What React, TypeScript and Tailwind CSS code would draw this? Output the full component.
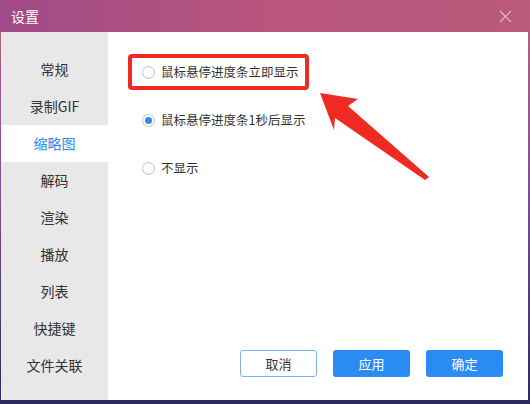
import { useState } from "react";

const font = { fontFamily: '"Noto Sans CJK SC", "Noto Sans", sans-serif' };

const menuItems = ["常规", "录制GIF", "缩略图", "解码", "渲染", "播放", "列表", "快捷键", "文件关联"];

const options = ["鼠标悬停进度条立即显示", "鼠标悬停进度条1秒后显示", "不显示"];

function Radio({ checked }: { checked: boolean }) {
  return (
    <span className="w-[13px] h-[13px] rounded-full border border-[#c4c4c4] bg-white flex items-center justify-center shrink-0">
      {checked && <span className="w-[7px] h-[7px] rounded-full bg-[#2e8ded]" />}
    </span>
  );
}

export default function App() {
  const [active, setActive] = useState(2);
  const [choice, setChoice] = useState(1);

  return (
    <div
      className="w-[530px] h-[404px] flex flex-col bg-gradient-to-b from-[#c0607e] via-[#7a4c96] to-[#2c2a5e] overflow-hidden"
      style={font}
    >
      {/* title bar */}
      <div className="h-[32px] shrink-0 flex items-center justify-between pl-[11px] pr-[18px] bg-gradient-to-r from-[#a04a87] via-[#b8567c] to-[#b85a7c]">
        <span className="text-white text-[14px] leading-none">设置</span>
        <svg width="13" height="13" viewBox="0 0 13 13" className="text-[#f0b8cc]">
          <path d="M1 1L12 12M12 1L1 12" stroke="currentColor" strokeWidth="1.2" />
        </svg>
      </div>

      <div className="flex-1 flex ml-[1px] mr-[2px] mb-[4px] bg-white relative">
        {/* sidebar */}
        <div className="w-[107px] bg-[#e8e8e8] pt-[19px] flex flex-col">
          {menuItems.map((m, i) => (
            <div
              key={m}
              onClick={() => setActive(i)}
              className={
                "h-[37px] flex items-center justify-center text-[14px] cursor-pointer " +
                (i === active ? "bg-white text-[#2d8ae6]" : "text-[#333333]")
              }
            >
              {m}
            </div>
          ))}
        </div>

        {/* content */}
        <div className="flex-1 flex flex-col pl-[20px] pt-[22px] pr-[25px]">
          <div className="flex flex-col">
            {options.map((o, i) => (
              <div
                key={o}
                onClick={() => setChoice(i)}
                className={
                  "h-[36px] flex items-center gap-[6px] text-[12.5px] text-[#333333] cursor-pointer w-fit pr-[6px] rounded-[4px] " +
                  (i === 0 ? "border-[4px] border-[#ee2a22] pl-[10px]" : "pl-[14px] mt-[12px]")
                }
              >
                <Radio checked={choice === i} />
                <span>{o}</span>
              </div>
            ))}
          </div>

          <div className="mt-auto mb-[23px] flex justify-end gap-[16px]">
            <button className="w-[77px] h-[27px] rounded-[3px] border border-[#7cb6e6] bg-white text-[13px] text-[#333333]">
              取消
            </button>
            <button className="w-[77px] h-[27px] rounded-[3px] bg-[#2a8cf2] text-[13px] text-white">
              应用
            </button>
            <button className="w-[77px] h-[27px] rounded-[3px] bg-[#2a8cf2] text-[13px] text-white">
              确定
            </button>
          </div>
        </div>

        {/* annotation arrow */}
        <svg
          className="absolute left-[300px] top-[50px] pointer-events-none"
          width="140"
          height="110"
          viewBox="0 0 140 110"
        >
          <polygon
            points="19,11 57,17 47,24 128,95 124,98 34,36 33,48"
            fill="#ee2a22"
          />
        </svg>
      </div>
    </div>
  );
}
